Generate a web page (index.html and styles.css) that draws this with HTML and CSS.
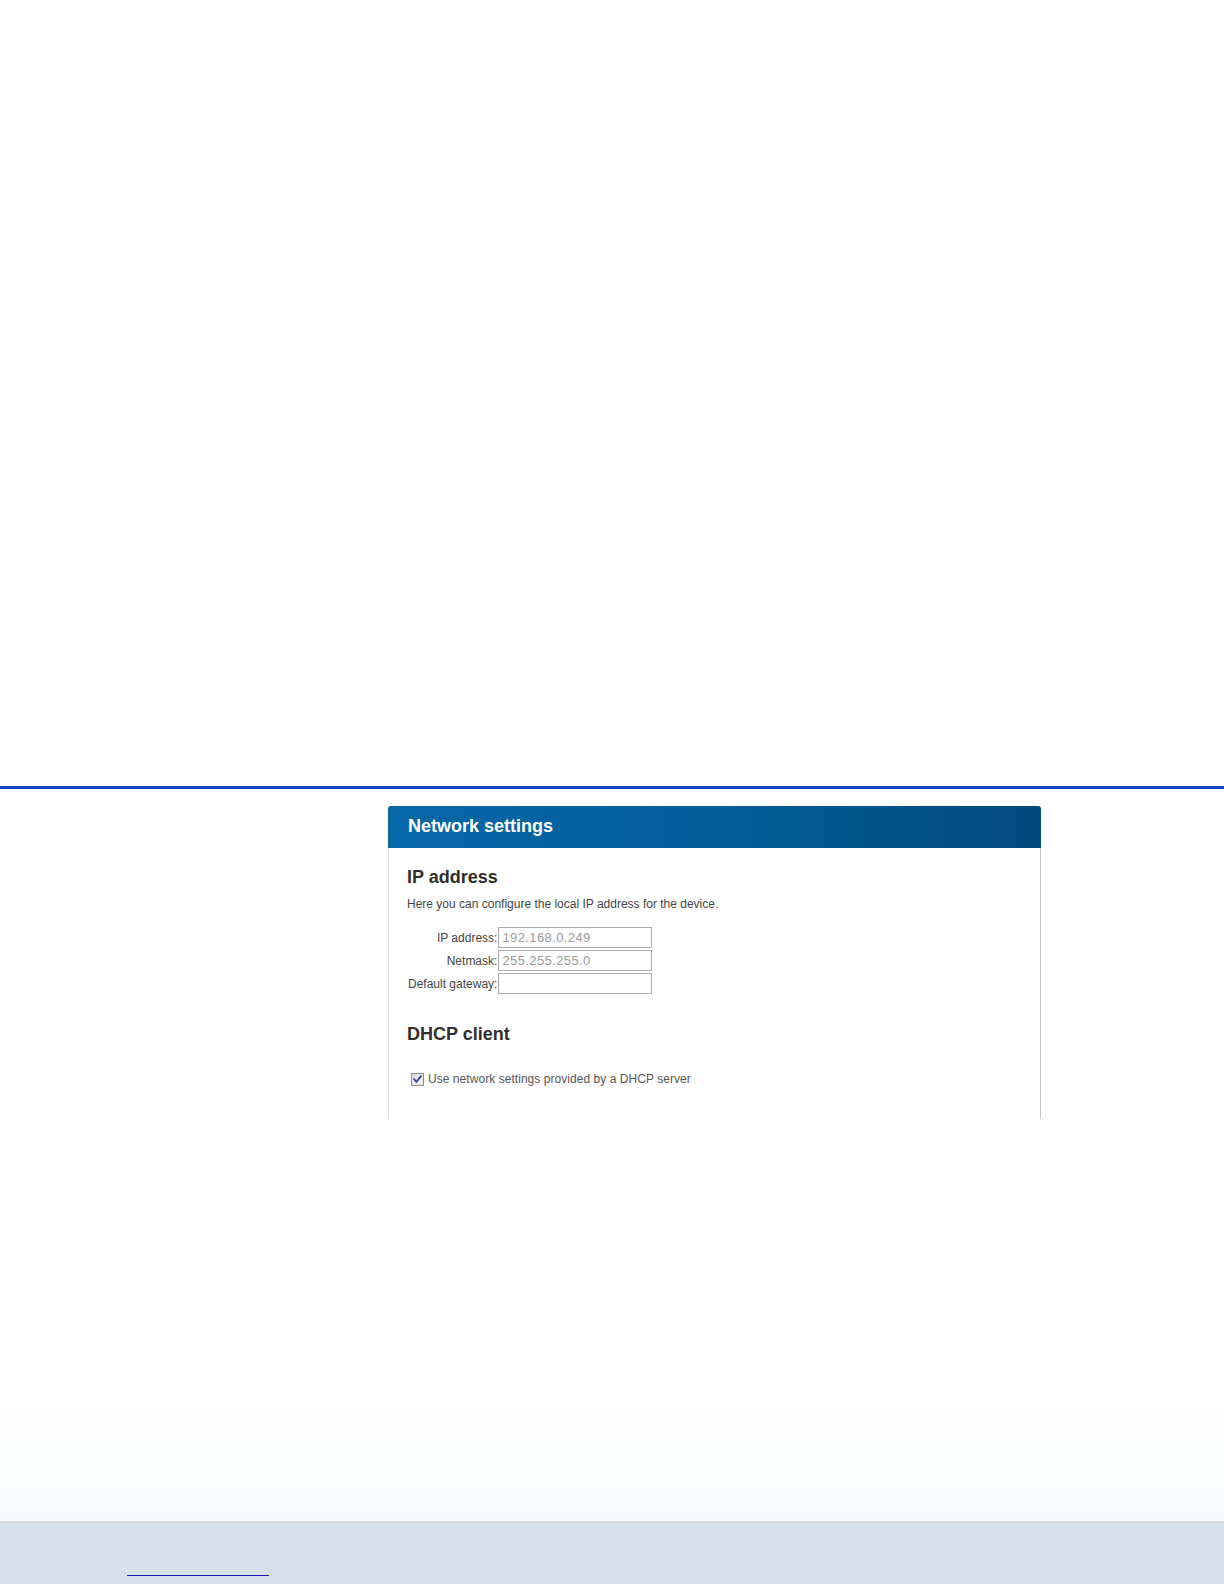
FILE: index.html
```html
<!DOCTYPE html>
<html lang="en">
<head>
<meta charset="utf-8">
<title>Network settings</title>
<link rel="stylesheet" href="styles.css">
</head>
<body>
<header class="top"></header>
<div class="rule"></div>
<div class="layout">
  <aside class="sidebar"></aside>
  <section class="panel">
    <h2 class="panel-title">Network settings</h2>
    <div class="panel-body">
      <h3 class="section-title">IP address</h3>
      <p class="desc">Here you can configure the local IP address for the device.</p>
      <div class="form-grid">
        <label class="field-label" for="ip">IP address:</label>
        <input class="field" id="ip" type="text" placeholder="192.168.0.249">
        <label class="field-label" for="mask">Netmask:</label>
        <input class="field" id="mask" type="text" placeholder="255.255.255.0">
        <label class="field-label" for="gw">Default gateway:</label>
        <input class="field" id="gw" type="text">
      </div>
      <h3 class="section-title dhcp">DHCP client</h3>
      <label class="check-row">
        <span class="checkbox">
          <svg width="13" height="13" viewBox="0 0 13 13">
            <defs>
              <linearGradient id="cbg" x1="0" y1="0" x2="1" y2="1">
                <stop offset="0" stop-color="#dcdcdc"/>
                <stop offset="1" stop-color="#ffffff"/>
              </linearGradient>
            </defs>
            <rect x="0.5" y="0.5" width="12" height="12" fill="#fff" stroke="#8f8f8f"/>
            <rect x="1.5" y="1.5" width="10" height="10" fill="url(#cbg)" stroke="#e4e4e4"/>
            <path d="M3.2 6.3 L5.4 8.8 L9.8 3.3" fill="none" stroke="#3c3ca8" stroke-width="1.8" stroke-linecap="square"/>
          </svg>
        </span>
        <span class="check-text">Use network settings provided by a DHCP server</span>
      </label>
    </div>
  </section>
</div>
<footer class="footer">
  <a class="footer-link" href="#"></a>
</footer>
</body>
</html>
```

FILE: styles.css
```css
html, body {
  margin: 0;
  padding: 0;
  background: #ffffff;
  font-family: "Liberation Sans", Arial, sans-serif;
}

.top {
  height: 786px;
  background: #ffffff;
}

.rule {
  height: 3px;
  background: #0c46c8;
}

.layout {
  display: flex;
  align-items: flex-start;
  height: 732px;
  padding-top: 17px;
  box-sizing: border-box;
  background: linear-gradient(to bottom, #ffffff 0%, #ffffff 84%, #f7fafc 100%);
}

.sidebar {
  width: 388px;
  flex: none;
}

.panel {
  width: 653px;
  flex: none;
  box-sizing: border-box;
  border-left: 1px solid #d6d6d6;
  border-right: 1px solid #c8c8c8;
  background: #ffffff;
  border-radius: 3px 3px 0 0;
}

.panel-title {
  margin: 0 -1px;
  height: 42px;
  box-sizing: border-box;
  padding: 0 0 2px 20px;
  line-height: 40px;
  font-size: 18px;
  font-weight: bold;
  color: #ffffff;
  border-radius: 3px 3px 0 0;
  background: linear-gradient(to right, #0768a8 0%, #035f9c 45%, #004a7d 100%);
}

.panel-body {
  padding: 18px 18px 32px 19px;
}

.section-title {
  margin: 0 0 0 -1px;
  font-size: 18px;
  line-height: 22px;
  font-weight: bold;
  color: #2e2e2e;
}

.desc {
  margin: 8px 0 15px -1px;
  font-size: 12px;
  line-height: 16px;
  color: #444444;
}

.form-grid {
  display: grid;
  grid-template-columns: max-content 154px;
  grid-auto-rows: 21px;
  row-gap: 2px;
  column-gap: 1px;
  align-items: center;
}

.field-label {
  font-size: 12px;
  line-height: 16px;
  color: #444444;
  text-align: right;
  justify-self: end;
}

.field {
  width: 154px;
  height: 21px;
  box-sizing: border-box;
  margin: 0;
  padding: 0 3px;
  border: 1px solid #ababab;
  border-radius: 0;
  font-family: "Liberation Sans", Arial, sans-serif;
  font-size: 13px;
  letter-spacing: 0.4px;
  color: #333333;
  background: #ffffff;
  outline: none;
}

.field::placeholder {
  color: #9a9a9a;
  opacity: 1;
}

.section-title.dhcp {
  margin-top: 29px;
}

.check-row {
  display: flex;
  align-items: center;
  margin-top: 26px;
  height: 16px;
  padding-left: 3px;
}

.checkbox {
  display: block;
  width: 13px;
  height: 13px;
  margin-right: 4px;
}

.checkbox svg {
  display: block;
}

.check-text {
  font-size: 12px;
  line-height: 16px;
  letter-spacing: 0.05px;
  color: #555555;
}

.footer {
  height: 63px;
  box-sizing: border-box;
  border-top: 2px solid #cfdae3;
  background: #d5e2ec;
  padding: 52px 0 0 127px;
}

.footer-link {
  display: block;
  width: 142px;
  height: 0;
  border-top: 1px solid #1a1ab4;
}
```
